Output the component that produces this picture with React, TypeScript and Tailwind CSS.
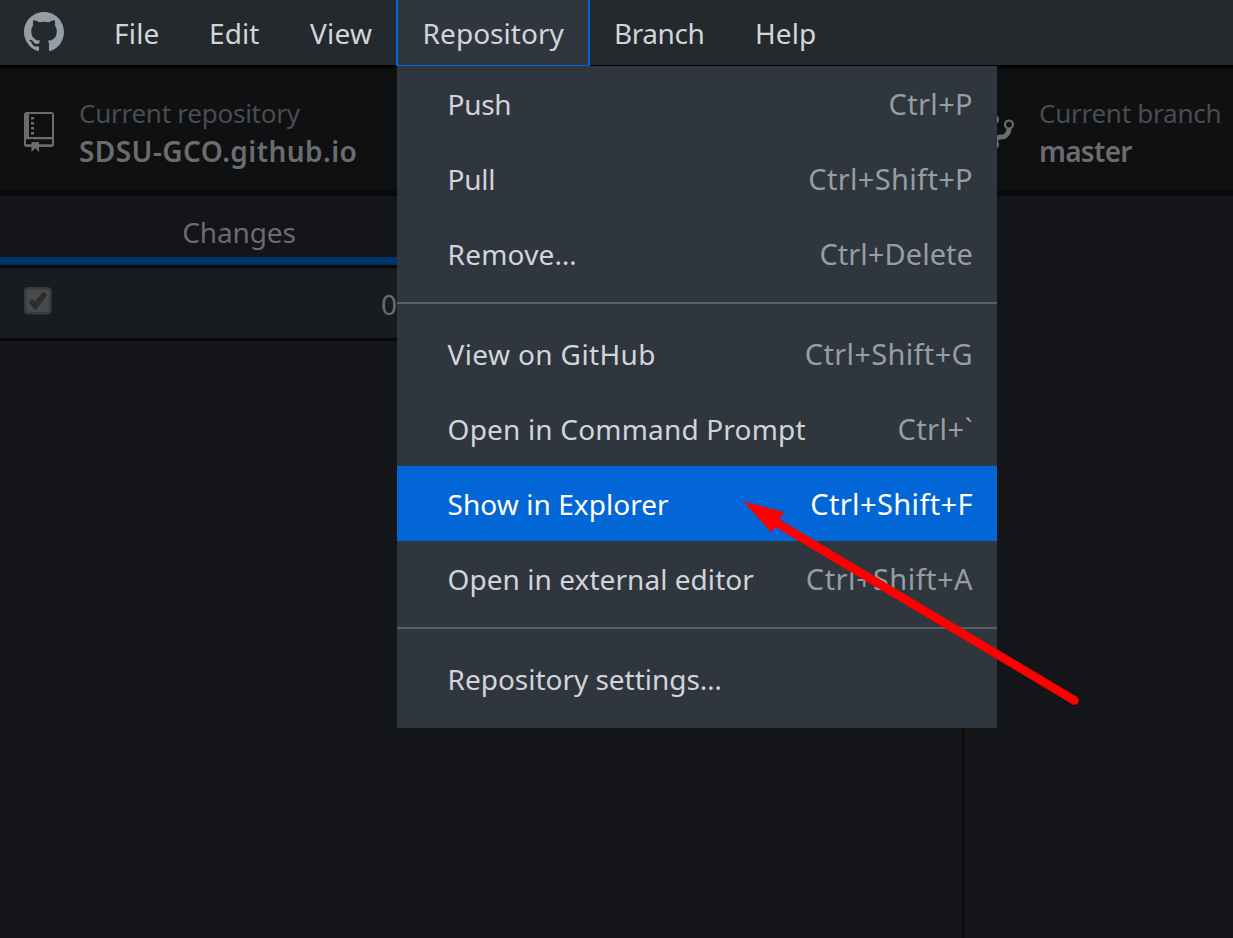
type MenuEntry = {
  label: string;
  labelClass: string;
  keys?: string;
  keysClass?: string;
  active?: boolean;
};

const groups: MenuEntry[][] = [
  [
    { label: 'Push', labelClass: 'tracking-[-0.3px]', keys: 'Ctrl+P', keysClass: 'tracking-[0.35px]' },
    { label: 'Pull', labelClass: 'tracking-[-0.3px]', keys: 'Ctrl+Shift+P', keysClass: 'tracking-[0.33px]' },
    { label: 'Remove…', labelClass: 'tracking-[0.2px]', keys: 'Ctrl+Delete', keysClass: 'tracking-[0.05px]' },
  ],
  [
    { label: 'View on GitHub', labelClass: 'tracking-[0.37px]', keys: 'Ctrl+Shift+G', keysClass: 'tracking-[0.33px]' },
    { label: 'Open in Command Prompt', labelClass: 'tracking-[0.18px]', keys: 'Ctrl+`', keysClass: 'tracking-[0.43px]' },
    { label: 'Show in Explorer', labelClass: 'tracking-[0.05px]', keys: 'Ctrl+Shift+F', keysClass: 'tracking-[0.38px]', active: true },
    { label: 'Open in external editor', labelClass: 'tracking-[0.05px]', keys: 'Ctrl+Shift+A', keysClass: 'tracking-[0.45px]' },
  ],
  [{ label: 'Repository settings…', labelClass: 'tracking-[-0.03px]' }],
];

function GitHubMark() {
  return (
    <svg className="ml-6 h-10 w-10 shrink-0 fill-[#959da5]" viewBox="0 0 16 16">
      <path
        fillRule="evenodd"
        d="M8 0C3.58 0 0 3.58 0 8c0 3.54 2.29 6.53 5.47 7.59.4.07.55-.17.55-.38 0-.19-.01-.82-.01-1.49-2.01.37-2.53-.49-2.69-.94-.09-.23-.48-.94-.82-1.13-.28-.15-.68-.52-.01-.53.63-.01 1.08.58 1.23.82.72 1.21 1.87.87 2.33.66.07-.52.28-.87.51-1.07-1.78-.2-3.64-.89-3.64-3.95 0-.87.31-1.59.82-2.15-.08-.2-.36-1.02.08-2.12 0 0 .67-.21 2.2.82.64-.18 1.32-.27 2-.27.68 0 1.36.09 2 .27 1.53-1.04 2.2-.82 2.2-.82.44 1.1.16 1.92.08 2.12.51.56.82 1.27.82 2.15 0 3.07-1.87 3.75-3.65 3.95.29.25.54.73.54 1.48 0 1.07-.01 1.93-.01 2.2 0 .21.15.46.55.38A8.013 8.013 0 0 0 16 8c0-4.42-3.58-8-8-8z"
      />
    </svg>
  );
}

function RepoIcon() {
  return (
    <svg className="h-10 w-[30px] shrink-0 fill-[#6a6c6e]" viewBox="0 0 12 16">
      <path
        fillRule="evenodd"
        d="M4 9H2.8V8H4v1zm0-2H2.8V6H4v1zm0-2H2.8V4H4v1zm0-2H2.8V2H4v1zm8-2v12c0 .55-.45 1-1 1H6v2l-1.5-1.5L3 16v-2H1c-.55 0-1-.45-1-1V1c0-.55.45-1 1-1h10c.55 0 1 .45 1 1zm-.8 9.9H.8v2H3V12h3v.9h5.2v-2zm0-10.1H2V10h9.2V.8z"
      />
    </svg>
  );
}

function BranchIcon() {
  return (
    <svg className="h-10 w-[25px] shrink-0 fill-[#6a6c6e]" viewBox="0 0 10 16">
      <path
        fillRule="evenodd"
        d="M10 5c0-1.11-.89-2-2-2a1.993 1.993 0 0 0-1 3.72v.3c-.02.52-.23.98-.63 1.38-.4.4-.86.61-1.38.63-.83.02-1.48.16-2 .45V4.72a1.993 1.993 0 0 0-1-3.72C.88 1 0 1.89 0 3a2 2 0 0 0 1 1.72v6.56c-.59.35-1 .99-1 1.72 0 1.11.89 2 2 2 1.11 0 2-.89 2-2 0-.53-.2-1-.53-1.36.09-.06.48-.41.59-.47.25-.11.56-.17.94-.17 1.05-.05 1.95-.45 2.75-1.25S8.95 7.77 9 6.73h-.02C9.59 6.37 10 5.73 10 5zM2 1.8c.66 0 1.2.55 1.2 1.2 0 .65-.55 1.2-1.2 1.2C1.35 4.2.8 3.65.8 3c0-.65.55-1.2 1.2-1.2zm0 12.41c-.66 0-1.2-.55-1.2-1.2 0-.65.55-1.2 1.2-1.2.65 0 1.2.55 1.2 1.2 0 .65-.55 1.2-1.2 1.2zm6-8c-.66 0-1.2-.55-1.2-1.2 0-.65.55-1.2 1.2-1.2.65 0 1.2.55 1.2 1.2 0 .65-.55 1.2-1.2 1.2z"
      />
    </svg>
  );
}

function CheckboxIcon() {
  return (
    <svg className="mt-[19px] ml-6 h-7 w-7" viewBox="0 0 28 28">
      <rect width="27.6" height="27.6" rx="4.5" fill="#3a3b3c" />
      <rect x="2.5" y="2.5" width="22.6" height="22.6" rx="2.5" fill="#48494a" />
      <path d="M4.5 15.5 8 11.8l3 2.7 8.3-9.7 4 3.4L11.5 23z" fill="#2c2d2e" />
    </svg>
  );
}

function RepositoryMenu() {
  return (
    <div className="absolute top-[66px] left-[397px] h-[662px] w-[600px] bg-[#2f363d]">
      {groups.map((group, index) => (
        <div key={index}>
          {index > 0 && <div className="mt-[11px] mb-3 h-0.5 bg-[#586069]" />}
          {group.map((item) => (
            <div
              key={item.label}
              className={
                item.active
                  ? 'flex h-[75px] items-center justify-between bg-[#0366d6] pt-px pr-6 pl-[50.6px] text-white'
                  : 'flex h-[75px] items-center justify-between pt-px pr-6 pl-[50.6px] text-[#d1d5da]'
              }
            >
              <span className={item.labelClass}>{item.label}</span>
              {item.keys && (
                <span className={item.active ? 'text-[29px] text-white' : 'text-[29px] text-[#959da5]'}>
                  <span className={item.keysClass}>{item.keys}</span>
                </span>
              )}
            </div>
          ))}
        </div>
      ))}
    </div>
  );
}

export default function App() {
  return (
    <div className="relative flex h-[938px] w-[1233px] flex-col overflow-hidden bg-[#141518] font-['Noto_Sans',sans-serif] text-[28px] leading-9 whitespace-nowrap">
      <nav className="flex h-[68px] shrink-0 border-b-[3px] border-black bg-[#24292e] text-[#d1d5da]">
        <div className="flex w-[89px] shrink-0 items-start pt-3">
          <GitHubMark />
        </div>
        <div className="flex h-[65px] w-[95px] items-center pl-[25px] tracking-[0.2px]">File</div>
        <div className="flex h-[65px] w-[100px] items-center pl-[25px] tracking-[0.1px]">Edit</div>
        <div className="flex h-[65px] w-[112px] items-center pl-[26px] tracking-[0.25px]">View</div>
        <div className="relative z-10 flex h-[66px] w-[194px] items-center border-x-2 border-b border-[#0366d6] bg-[#2f363d] pl-[24.6px] tracking-[0.04px]">
          Repository
        </div>
        <div className="flex h-[65px] w-[141px] items-center pl-6 tracking-[-0.43px]">Branch</div>
        <div className="flex h-[65px] items-center pl-6 tracking-[0.1px]">Help</div>
      </nav>

      <header className="flex h-32 shrink-0 border-b-[6px] border-[#0a0a0b] bg-[#0f1012]">
        <div className="flex w-[964px] shrink-0 pt-[27px] pl-6">
          <div className="pt-[17px]">
            <RepoIcon />
          </div>
          <div className="ml-[25px]">
            <div className="h-[38px] text-[26px] tracking-[-0.25px] text-[#494c50]">Current repository</div>
            <div className="font-semibold tracking-[0.43px] text-[#6a6c6e]">SDSU-GCO.github.io</div>
          </div>
        </div>
        <div className="flex pt-[27px] pl-[25px]">
          <div className="pt-[17px]">
            <BranchIcon />
          </div>
          <div className="ml-[25px]">
            <div className="h-[38px] text-[26px] tracking-[-0.25px] text-[#494c50]">Current branch</div>
            <div className="font-semibold tracking-[-0.7px] text-[#6a6c6e]">master</div>
          </div>
        </div>
      </header>

      <main className="flex grow">
        <aside className="w-[964px] border-r-2 border-[#0a0a0b] text-[#6a6c6e]">
          <div className="flex h-[72px] border-b-[3px] border-[#0a0a0b]">
            <div className="h-[69px] w-[478px] border-b-8 border-[#01336b] pt-[18px] text-center tracking-[-0.1px]">
              Changes
            </div>
          </div>
          <div className="flex h-[73px] border-b-[3px] border-[#0a0a0b] bg-[#191c1e]">
            <CheckboxIcon />
            <span className="ml-[329px] pt-[18px]">0</span>
          </div>
        </aside>
      </main>

      <RepositoryMenu />

      <svg className="absolute top-[490px] left-[730px] h-[230px] w-[360px]" viewBox="730 490 360 230">
        <path d="M772 520 1074.5 700.5" stroke="#ff0000" strokeWidth="8.6" strokeLinecap="round" />
        <path d="M743.5 501.5 784 512 771.5 532.5z" fill="#ff0000" />
      </svg>
    </div>
  );
}
